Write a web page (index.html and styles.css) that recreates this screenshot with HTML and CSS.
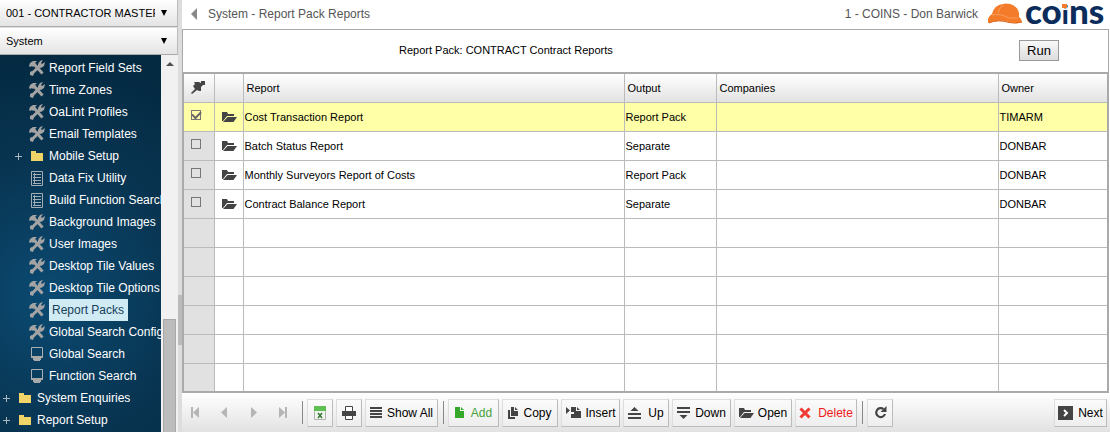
FILE: index.html
```html
<!DOCTYPE html>
<html lang="en">
<head>
<meta charset="utf-8">
<title>System - Report Pack Reports</title>
<link rel="stylesheet" href="styles.css">
</head>
<body>
<svg class="sprite" aria-hidden="true">
  <symbol id="tools" viewBox="0 0 16 16"><path d="M3 13.5 10.500 6M5 4l8.500 9.500" stroke="#a3a3a3" stroke-width="3" fill="none"/><path d="M0 6 1 3 4 1H8L6 3 7 5 4 7 3 6 1 7ZM9 4 11 1 14 0 12 3 13 4 16 2 15 6 12 8 9 7ZM1 12l2-1 2 2-1 3-3-1Z" fill="#a3a3a3"/></symbol>
  <symbol id="folder" viewBox="0 0 12 10"><path d="M0 0h5v2h7v8H0Z" fill="#f0d468"/></symbol>
  <symbol id="sheet" viewBox="0 0 12 15"><path d="M.5.5h11v14H.5ZM2 3.500h8M2 6.500h8M2 9.500h8M2 12.500h8M3.500 2v11" fill="none" stroke="#a3adb3"/></symbol>
  <symbol id="screen" viewBox="0 0 12 14"><path d="M.5.5h11v10H.5Z" fill="none" stroke="#a8b0b4"/><path d="M0 9h12v2h-2v2H9v1H3v-1H2v-2H0Z" fill="#a8a8a8"/></symbol>
  <symbol id="open" viewBox="0 0 15 10"><path d="M0 0h5l1 2h6v2H5L1 9H0Z" fill="#444"/><path d="M5.500 5H15l-3.500 5H1Z" fill="#444"/></symbol>
</svg>
<div class="app">
  <aside class="sidebar">
    <div class="picker"><select class="picker-select" aria-label="Company"><option>001 - CONTRACTOR MASTER</option></select><span class="picker-arrow"></span></div>
    <div class="picker"><select class="picker-select" aria-label="Module"><option>System</option></select><span class="picker-arrow"></span></div>
    <div class="tree-wrap">
      <nav class="tree">
        <a href="#" class="node"><svg class="i-tools"><use href="#tools"/></svg><span class="label">Report Field Sets</span></a>
        <a href="#" class="node"><svg class="i-tools"><use href="#tools"/></svg><span class="label">Time Zones</span></a>
        <a href="#" class="node"><svg class="i-tools"><use href="#tools"/></svg><span class="label">OaLint Profiles</span></a>
        <a href="#" class="node"><svg class="i-tools"><use href="#tools"/></svg><span class="label">Email Templates</span></a>
        <a href="#" class="node branch"><span class="plus"></span><svg class="i-folder"><use href="#folder"/></svg><span class="label">Mobile Setup</span></a>
        <a href="#" class="node"><svg class="i-sheet"><use href="#sheet"/></svg><span class="label">Data Fix Utility</span></a>
        <a href="#" class="node"><svg class="i-sheet"><use href="#sheet"/></svg><span class="label">Build Function Search</span></a>
        <a href="#" class="node"><svg class="i-tools"><use href="#tools"/></svg><span class="label">Background Images</span></a>
        <a href="#" class="node"><svg class="i-tools"><use href="#tools"/></svg><span class="label">User Images</span></a>
        <a href="#" class="node"><svg class="i-tools"><use href="#tools"/></svg><span class="label">Desktop Tile Values</span></a>
        <a href="#" class="node"><svg class="i-tools"><use href="#tools"/></svg><span class="label">Desktop Tile Options</span></a>
        <a href="#" class="node"><svg class="i-tools"><use href="#tools"/></svg><span class="label current">Report Packs</span></a>
        <a href="#" class="node"><svg class="i-tools"><use href="#tools"/></svg><span class="label">Global Search Config</span></a>
        <a href="#" class="node"><svg class="i-screen"><use href="#screen"/></svg><span class="label">Global Search</span></a>
        <a href="#" class="node"><svg class="i-screen"><use href="#screen"/></svg><span class="label">Function Search</span></a>
        <a href="#" class="node root"><span class="plus"></span><svg class="i-folder"><use href="#folder"/></svg><span class="label">System Enquiries</span></a>
        <a href="#" class="node root"><span class="plus"></span><svg class="i-folder"><use href="#folder"/></svg><span class="label">Report Setup</span></a>
      </nav>
      <div class="scrollbar"><span class="scroll-up"></span><span class="thumb"></span></div>
    </div>
  </aside>
  <div class="splitter"><span class="grip"></span></div>
  <main class="main">
    <header class="topbar">
      <svg class="back" viewBox="0 0 6 12"><path d="M6 0v12L0 6Z" fill="#888"/></svg>
      <h1 class="title">System - Report Pack Reports</h1>
      <span class="user">1 - COINS - Don Barwick</span>
      <svg class="logo" viewBox="0 0 120 26" role="img" aria-label="coins">
        <path d="M0 21Q-1 16 4 13Q6 4 15 3Q17 2 22 3Q32 6 31 16Q34 18 34 21Q30 23 21 21Q10 18 0 22Z" fill="#f47b29"/>
        <path d="M4 14Q12 12 21 17L30 17M10 12Q11 6 16 4" fill="none" stroke="#fa9d5c" stroke-width="1"/>
        <path d="M1 22Q10 18 21 21.500Q28 23 34 21" fill="none" stroke="#d9611b" stroke-width="1"/>
        <text class="logo-text" x="37" y="23">co<tspan class="logo-i">i</tspan>ns</text>
        <path d="M74 3h5v4h-5Z" fill="#f47b29"/>
      </svg>
    </header>
    <section class="form">
      <span class="form-text">Report Pack: CONTRACT Contract Reports</span>
      <button class="run">Run</button>
    </section>
    <table class="grid">
      <colgroup><col class="c-pin"><col class="c-open"><col class="c-report"><col class="c-output"><col><col class="c-owner"></colgroup>
      <thead><tr><th><svg class="pin" viewBox="0 0 14 13"><path d="M3 1h5L10 2V0h4v4h-2l-2 2v4H8L6 9 1 13 0 12 4 8 2 5l2-2Z" fill="#444"/></svg></th><th></th><th>Report</th><th>Output</th><th>Companies</th><th>Owner</th></tr></thead>
      <tbody>
        <tr class="selected"><td class="pick"><input type="checkbox" class="tick" aria-label="Cost Transaction Report" checked></td><td><svg class="i-open"><use href="#open"/></svg></td><td>Cost Transaction Report</td><td>Report Pack</td><td></td><td>TIMARM</td></tr>
        <tr><td class="pick"><input type="checkbox" class="tick" aria-label="Batch Status Report"></td><td><svg class="i-open"><use href="#open"/></svg></td><td>Batch Status Report</td><td>Separate</td><td></td><td>DONBAR</td></tr>
        <tr><td class="pick"><input type="checkbox" class="tick" aria-label="Monthly Surveyors Report of Costs"></td><td><svg class="i-open"><use href="#open"/></svg></td><td>Monthly Surveyors Report of Costs</td><td>Report Pack</td><td></td><td>DONBAR</td></tr>
        <tr><td class="pick"><input type="checkbox" class="tick" aria-label="Contract Balance Report"></td><td><svg class="i-open"><use href="#open"/></svg></td><td>Contract Balance Report</td><td>Separate</td><td></td><td>DONBAR</td></tr>
        <tr><td class="pick"></td><td></td><td></td><td></td><td></td><td></td></tr>
        <tr><td class="pick"></td><td></td><td></td><td></td><td></td><td></td></tr>
        <tr><td class="pick"></td><td></td><td></td><td></td><td></td><td></td></tr>
        <tr><td class="pick"></td><td></td><td></td><td></td><td></td><td></td></tr>
        <tr><td class="pick"></td><td></td><td></td><td></td><td></td><td></td></tr>
        <tr><td class="pick"></td><td></td><td></td><td></td><td></td><td></td></tr>
      </tbody>
    </table>
    <footer class="toolbar">
      <div class="pager">
        <button class="page" aria-label="First"><svg width="9" height="11" viewBox="0 0 9 11"><path d="M0 0h2v11H0ZM8 0v11L2 5.500Z" fill="#b5b5b5"/></svg></button>
        <button class="page" aria-label="Previous"><svg width="9" height="11" viewBox="0 0 9 11"><path d="M7 0v11L1 5.500Z" fill="#b5b5b5"/></svg></button>
        <button class="page" aria-label="Following"><svg width="9" height="11" viewBox="0 0 9 11"><path d="M2 0v11l6-5.500Z" fill="#b5b5b5"/></svg></button>
        <button class="page" aria-label="Last"><svg width="9" height="11" viewBox="0 0 9 11"><path d="M7 0h2v11H7ZM1 0v11l6-5.500Z" fill="#b5b5b5"/></svg></button>
      </div>
      <div class="group">
        <button class="btn square" aria-label="Export"><svg width="12" height="14" viewBox="0 0 12 14"><path d="M0 0h12v14H0Z" fill="#eef5ec"/><path d="M.5.5h11v13H.5Z" fill="none" stroke="#b4b4b4"/><path d="M0 0h12v5H0Z" fill="#5fbf50"/><path d="m4 7 4 5M8 7l-4 5" stroke="#39753a" stroke-width="1.500"/></svg></button>
        <button class="btn square" aria-label="Print"><svg width="14" height="14" viewBox="0 0 14 14"><path d="M3.500 6V.5h7V6M3.500 9v4.500h7V9" fill="#fff" stroke="#444"/><path d="M0 5h14v5H0Z" fill="#444"/></svg></button>
        <button class="btn showall"><svg width="12" height="11" viewBox="0 0 12 11"><path d="M0 0h12v2H0ZM0 3h12v2H0ZM0 6h12v2H0ZM0 9h12v2H0Z" fill="#444"/></svg>Show All</button>
      </div>
      <div class="group">
        <button class="btn add"><svg width="9" height="11" viewBox="0 0 9 11"><path d="M0 0h5v4h4v7H0ZM6 0l3 3H6Z" fill="#35a82c"/></svg>Add</button>
        <button class="btn copy"><svg width="10" height="12" viewBox="0 0 10 12"><path d="M3 0h3v4h4v5H3ZM7 0l3 3H7ZM0 3h2v7h5v2H0Z" fill="#444"/></svg>Copy</button>
        <button class="btn insert"><svg width="15" height="11" viewBox="0 0 15 11"><path d="M0 0l4 3.500L0 7ZM5 0h5v4h5v7H5V7h3V5H5ZM11 0l3 3h-3Z" fill="#444"/></svg>Insert</button>
        <button class="btn up"><svg width="13" height="12" viewBox="0 0 13 12"><path d="m6.500 0 4 4h-8ZM0 6h13v2H0ZM0 10h13v2H0Z" fill="#444"/></svg>Up</button>
        <button class="btn down"><svg width="13" height="12" viewBox="0 0 13 12"><path d="M0 0h13v2H0ZM0 4h13v2H0ZM2.500 8h8l-4 4Z" fill="#444"/></svg>Down</button>
        <button class="btn opener"><svg class="i-open"><use href="#open"/></svg>Open</button>
        <button class="btn delete"><svg width="12" height="12" viewBox="0 0 12 12"><path d="m1.500 1.500 9 9M10.500 1.500l-9 9" stroke="#f03a34" stroke-width="3"/></svg>Delete</button>
      </div>
      <div class="group">
        <button class="btn square" aria-label="Refresh"><svg width="13" height="13" viewBox="0 0 13 13"><path d="M9.500 3A4.500 4.500 0 1 0 11 8" fill="none" stroke="#444" stroke-width="2.200"/><path d="M12.500 0v6H6.500Z" fill="#444"/></svg></button>
      </div>
      <button class="btn next"><svg width="15" height="14" viewBox="0 0 15 14"><path d="M0 0h15v14H0Z" fill="#444"/><path d="m6 4 3 3-3 3" fill="none" stroke="#fff" stroke-width="2"/></svg>Next</button>
    </footer>
  </main>
</div>
</body>
</html>
```
FILE: styles.css
```css
* { box-sizing: border-box; }
body { margin: 0; font: 11px "Liberation Sans", Arial, sans-serif; color: #000; background: #fff; }
button, select { font: inherit; color: inherit; }
svg { display: block; flex: none; }
.sprite { position: absolute; width: 0; height: 0; }
.app { display: grid; grid-template-columns: 178px 4px minmax(0, 1fr); min-height: 100vh; }

.sidebar { display: flex; flex-direction: column; min-width: 0; background: #ddd; }
.picker { display: grid; grid-template-columns: 1fr 16px; align-items: center; height: 27px; margin-bottom: 1px; border-bottom: 1px solid #aaa; border-right: 1px solid #bbb; background: linear-gradient(#fff, #e4e4e4); }
.picker-select { appearance: none; grid-area: 1 / 1 / 2 / 3; width: 100%; height: 26px; border: 0; padding: 0 22px 0 6px; background: none; overflow: hidden; }
.picker-arrow { grid-area: 1 / 2; width: 0; border: 3px solid transparent; border-top: 6px solid #000; border-bottom: 0; pointer-events: none; }

.tree-wrap { display: flex; flex: 1; min-height: 0; margin-top: -1px; }
.tree { flex: 1; min-width: 0; overflow: hidden; padding-top: 2px; background: radial-gradient(circle at 30% 64%, #0b4a72, #083552 50%, #042a42 90%); }
.node { display: flex; align-items: center; height: 22px; padding-left: 29px; color: #fff; font-size: 12px; text-decoration: none; white-space: nowrap; }
.branch { padding-left: 15px; }
.root { padding-left: 3px; }
.label { line-height: 22px; margin-left: 4px; }
.current { padding: 0 4px 0 3px; background: #d0ebf3; color: #17405c; }
.plus { width: 7px; height: 7px; margin-right: 9px; background: linear-gradient(#aab8c0, #aab8c0) center / 7px 1px no-repeat, linear-gradient(#aab8c0, #aab8c0) center / 1px 7px no-repeat; }
.i-tools { width: 16px; height: 16px; }
.i-folder { width: 12px; height: 10px; margin-right: 2px; }
.i-sheet { width: 12px; height: 15px; margin: 0 2px; }
.i-screen { width: 12px; height: 14px; margin: 0 2px; }
.scrollbar { display: flex; flex-direction: column; align-items: center; width: 17px; padding-top: 7px; background: #f1f1f1; }
.scroll-up { width: 0; border: 4px solid transparent; border-top: 0; border-bottom: 4px solid #505050; }
.thumb { width: 13px; height: 113px; margin-top: auto; border: 1px solid #a8a8a8; border-bottom: 0; background: #bcbcbc; }
.splitter { display: flex; flex-direction: column; justify-content: flex-end; padding-bottom: 87px; background: #ddd; }
.grip { height: 50px; background: #bbb; }

.main { display: flex; flex-direction: column; min-width: 0; }
.topbar { display: flex; align-items: center; height: 29px; padding: 0 2px 2px 9px; color: #555; font-size: 12px; }
.back { width: 6px; height: 12px; }
.title { margin: 0 auto 0 11px; font-size: 12px; font-weight: normal; }
.logo { width: 120px; height: 26px; margin-left: 10px; }
.logo-text { font: 900 35px Lato, sans-serif; fill: #0c2d5c; }
.logo-i { font-size: 27px; }
.form { display: flex; align-items: center; height: 43px; margin-right: 1px; padding: 0 49px 2px 216px; border: 1px solid #aaa; border-bottom: 0; }
.run { margin-left: auto; width: 40px; height: 21px; padding: 0; border: 1px solid #999; background: linear-gradient(#f8f8f8, #ddd); font-size: 13px; }

.grid { width: calc(100% - 1px); table-layout: fixed; border-collapse: collapse; border: 2px solid #aaa; }
.c-pin { width: 31px; }
.c-open { width: 29px; }
.c-report { width: 381px; }
.c-output { width: 92px; }
.c-owner { width: 110px; }
.grid th, .grid td { height: 29px; padding: 0 1px; border: 1px solid #bbb; text-align: left; font-weight: normal; }
.grid th { padding: 0 3px; background: linear-gradient(#fff, #e2e2e2); }
.grid .pick { background: #e1e1e1; }
.grid .selected td { background: #ffffa8; }
.pin { width: 14px; height: 13px; margin-left: 4px; }
.tick { appearance: none; display: grid; place-items: center; width: 10px; height: 10px; margin: 0 0 4px 6px; border: 1px solid #777; }
.tick:checked::before { content: ""; width: 7px; height: 4px; margin-bottom: 2px; border: solid #666; border-width: 0 0 2px 2px; transform: rotate(-45deg); }
.i-open { width: 15px; height: 10px; }
.grid .i-open { margin-left: 6px; }

.toolbar { display: flex; align-items: center; flex: 1; min-height: 38px; padding: 0 3px 0 6px; background: linear-gradient(#fff, #e2e2e2); }
.pager { display: flex; gap: 14px; margin-right: 7px; }
.page { display: grid; place-items: center; width: 15px; height: 20px; padding: 0; border: 0; background: none; }
.group { display: flex; align-items: center; gap: 3px; }
.group::before { content: ""; width: 1px; height: 23px; margin: 0 1px 0 5px; background: #888; }
.btn { display: flex; align-items: center; justify-content: center; gap: 7px; height: 28px; padding: 0 5px; border: 1px solid #ddd; border-right-color: #bbb; border-bottom-color: #bbb; background: linear-gradient(#fbfbfb, #eee); font-size: 12px; white-space: nowrap; }
.square { width: 26px; padding: 0; }
.showall { width: 73px; }
.add { width: 51px; color: #47a23a; }
.copy { width: 56px; }
.insert { width: 59px; }
.up { width: 46px; }
.down { width: 59px; }
.opener { width: 58px; gap: 4px; }
.delete { width: 62px; color: #f01818; }
.next { width: 53px; margin-left: auto; gap: 5px; }
.showall, .copy, .insert, .down { gap: 5px; }
```
